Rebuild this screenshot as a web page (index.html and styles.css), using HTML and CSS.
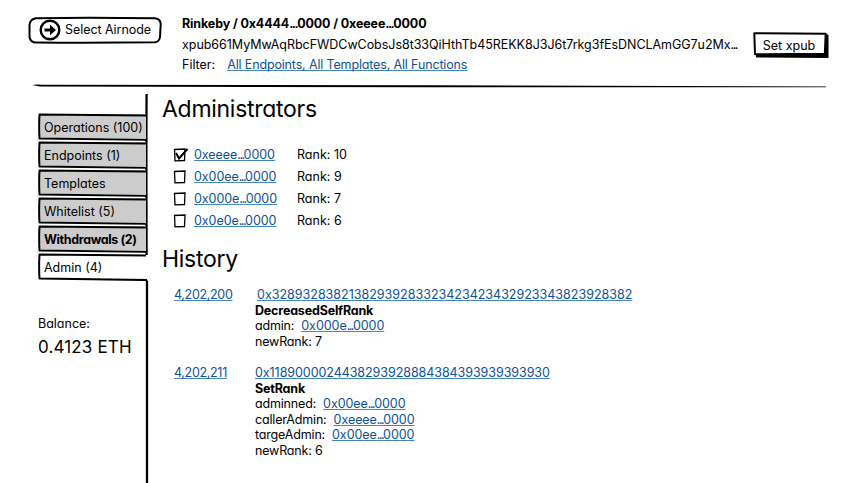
FILE: index.html
```html
<!DOCTYPE html>
<html lang="en">
<head>
<meta charset="utf-8">
<title>Airnode administrators</title>
<link rel="stylesheet" href="styles.css">
</head>
<body>
<div class="app">
  <header class="header">
    <button class="select" type="button">
      <svg class="frame" viewBox="0 0 134 28"><path d="M8 2.200Q60 1.200 127 2.300Q132.500 3 132.700 8L132 21Q131.500 25.800 127 26.200Q70 27 8 26.500Q2.500 26.500 1.500 21L1.500 9Q2 3 8 2.200Z"/></svg>
      <svg class="arrow" viewBox="0 0 22 22"><circle cx="11" cy="11" r="9.300"/><path d="M5.500 9.500H11V5.700L17 11L11 16.300V12.500H5.500Z"/></svg>
      <span>Select Airnode</span>
    </button>
    <div class="info">
      <div class="path">Rinkeby / 0x4444<span class="dots">...</span>0000 / 0xeeee<span class="dots">...</span>0000</div>
      <div class="xpub">xpub661MyMwAqRbcFWDCwCobsJs8t33QiHthTb45REKK8J3J6t7rkg3fEsDNCLAmGG7u2Mx<span class="dots">...</span></div>
      <div class="filter"><span>Filter:</span><a class="link filters">All Endpoints, All Templates, All Functions</a></div>
    </div>
    <button class="set" type="button">
      <svg class="frame" viewBox="0 0 76 27"><path class="solid" d="M3 22L73 2L75.500 3V26L3 25.500Z"/><path class="paper" d="M1.300 1.300L72.700 1.700L71.800 21.700L2 22.300Z"/></svg>
      <span>Set xpub</span>
    </button>
  </header>
  <svg class="divider" viewBox="0 0 796 5"><path d="M0 1Q3 .3 10 .8L400 1.200L794 2.400V3.300L400 3.200L8 2.500Z"/></svg>
  <div class="body">
    <aside class="sidebar">
      <svg class="rail" viewBox="0 0 6 391"><path d="M2.600 1Q2.200 40 2.600 162M3 187.500V391"/></svg>
      <nav class="tabs">
        <div class="tab"><svg class="frame" viewBox="0 0 110 28"><path d="M109 2.500L1.500 1.500Q.8 14 1.500 25.500L109 27"/></svg><span>Operations (100)</span></div>
        <div class="tab"><svg class="frame" viewBox="0 0 110 28"><path d="M109 2.500L1.500 1.500Q.8 14 1.500 25.500L109 27"/></svg><span>Endpoints (1)</span></div>
        <div class="tab"><svg class="frame" viewBox="0 0 110 28"><path d="M109 2.500L1.500 1.500Q.8 14 1.500 25.500L109 27"/></svg><span>Templates</span></div>
        <div class="tab"><svg class="frame" viewBox="0 0 110 28"><path d="M109 2.500L1.500 1.500Q.8 14 1.500 25.500L109 27"/></svg><span>Whitelist (5)</span></div>
        <div class="tab strong"><svg class="frame" viewBox="0 0 110 28"><path d="M109 2.500L1.500 1.500Q.8 14 1.500 25.500L109 27"/></svg><span>Withdrawals (2)</span></div>
        <div class="tab active"><svg class="frame" viewBox="0 0 110 28"><path d="M109 2.500L1.500 1.500Q.8 14 1.500 25.500L110 27.200"/></svg><span>Admin (4)</span></div>
      </nav>
      <div class="balance">Balance:</div>
      <div class="amount">0.4123 ETH</div>
    </aside>
    <main class="main">
      <h1 class="title">Administrators</h1>
      <div class="admins">
        <div class="admin"><svg class="check" viewBox="0 0 16 16"><path d="M1 2.500L12 2L11.500 13.500L2 13.800L1.500 2"/><path class="tick" d="M3 6L6 11.500L14.500 2"/></svg><a class="link addr">0xeeee<span class="dots">...</span>0000</a><span class="rank">Rank: 10</span></div>
        <div class="admin"><svg class="check" viewBox="0 0 16 16"><path d="M1 2.500L12 2L11.500 13.500L2 13.800L1.500 2"/></svg><a class="link addr">0x00ee<span class="dots">...</span>0000</a><span class="rank">Rank: 9</span></div>
        <div class="admin"><svg class="check" viewBox="0 0 16 16"><path d="M1 2.500L12 2L11.500 13.500L2 13.800L1.500 2"/></svg><a class="link addr">0x000e<span class="dots">...</span>0000</a><span class="rank">Rank: 7</span></div>
        <div class="admin"><svg class="check" viewBox="0 0 16 16"><path d="M1 2.500L12 2L11.500 13.500L2 13.800L1.500 2"/></svg><a class="link addr">0x0e0e<span class="dots">...</span>0000</a><span class="rank">Rank: 6</span></div>
      </div>
      <h2 class="title">History</h2>
      <section class="entry">
        <div><a class="link block">4,202,200</a></div>
        <div class="details">
          <div class="hash-row inset"><a class="link">0x32893283821382939283323423423432923343823928382</a></div>
          <div class="event">DecreasedSelfRank</div>
          <div class="field"><span>admin:</span><a class="link addr">0x000e<span class="dots">...</span>0000</a></div>
          <div class="field"><span>newRank: 7</span></div>
        </div>
      </section>
      <section class="entry">
        <div><a class="link block">4,202,211</a></div>
        <div class="details">
          <div class="hash-row"><a class="link hash">0x1189000024438293928884384393939393930</a></div>
          <div class="event">SetRank</div>
          <div class="field"><span>adminned:</span><a class="link addr">0x00ee<span class="dots">...</span>0000</a></div>
          <div class="field"><span>callerAdmin:</span><a class="link addr">0xeeee<span class="dots">...</span>0000</a></div>
          <div class="field"><span>targeAdmin:</span><a class="link addr">0x00ee<span class="dots">...</span>0000</a></div>
          <div class="field"><span>newRank: 6</span></div>
        </div>
      </section>
    </main>
  </div>
</div>
</body>
</html>
```
FILE: styles.css
```css
* { box-sizing: border-box; }
body {
  margin: 0;
  background: #fff;
  color: #000;
  font: 12.5px/16px Inter, "Liberation Sans", sans-serif;
  font-feature-settings: "cv11";
  white-space: nowrap;
}
button {
  border: 0;
  padding: 0;
  background: none;
  color: inherit;
  font: inherit;
  font-feature-settings: inherit;
}
.app { width: 868px; height: 483px; overflow: hidden; }
.header { display: flex; height: 84px; padding-left: 28px; }
.select {
  position: relative;
  display: flex;
  align-items: center;
  gap: 4px;
  width: 134px;
  height: 28px;
  margin-top: 16px;
  padding-left: 11px;
  letter-spacing: -.06px;
}
.frame { position: absolute; inset: 0; width: 100%; height: 100%; fill: none; stroke: #000; stroke-width: 2; stroke-linejoin: round; }
.frame + span, .arrow { position: relative; }
.arrow { width: 22px; height: 22px; fill: #000; }
.arrow circle { fill: none; stroke: #000; stroke-width: 2.4; }
.info { flex: none; width: 591px; padding: 16px 0 0 20px; }
.dots { letter-spacing: -1.5px; }
.path { font-weight: 700; letter-spacing: -.13px; }
.xpub { margin-top: 5px; letter-spacing: -.04px; }
.filter { display: flex; gap: 12px; margin-top: 4px; }
.filters { letter-spacing: -.15px; }
.set { position: relative; width: 76px; height: 27px; margin-top: 32px; padding-right: 4px; }
.solid { fill: #000; stroke: none; }
.paper { fill: #fff; stroke: #000; }
.link {
  color: #0c5394;
  text-decoration: underline 1px #4585bd;
  text-underline-offset: 1px;
  text-decoration-skip-ink: none;
}
.divider { display: block; width: 796px; height: 5px; margin-left: 32px; fill: #000; }
.body { display: flex; height: 394px; }
.sidebar { position: relative; width: 162px; padding: 24px 0 0 38px; }
.rail { position: absolute; left: 144px; top: 4px; width: 6px; height: 391px; fill: none; stroke: #000; stroke-width: 2.3; }
.tabs { width: 109px; }
.tab { position: relative; height: 28px; padding: 7px 0 0 6px; background: linear-gradient(#ccc, #ccc) 1px 1px / 107px 25px no-repeat; }
.tab.active { background: none; }
.strong { font-weight: 700; letter-spacing: -.38px; }
.balance { margin-top: 35px; }
.amount { margin-top: 4px; font-size: 17px; line-height: 22px; letter-spacing: .15px; }
.title { margin: 0; font-size: 23px; font-weight: 400; line-height: 30px; letter-spacing: -.28px; }
.main { padding-top: 5px; }
.admins { padding: 20px 0 12px 12px; }
.admin { display: flex; align-items: center; height: 22px; }
.check { width: 16px; height: 16px; margin: 0 5px 0 -1px; fill: none; stroke: #000; stroke-width: 1.3; }
.tick { stroke-width: 2; }
.addr { width: 82px; letter-spacing: -.05px; }
.addr .dots { letter-spacing: -1.5px; }
.rank { margin-left: 21px; }
.entry { display: grid; grid-template-columns: 81px 1fr; padding: 13px 0 0 12px; }
.entry + .entry { padding-top: 16px; }
.block { letter-spacing: -.32px; }
.inset { padding-left: 2px; }
.hash { letter-spacing: -.06px; }
.event { height: 15px; font-weight: 700; letter-spacing: -.18px; }
.field { display: flex; gap: 7px; height: 15.5px; letter-spacing: -.17px; }
```
